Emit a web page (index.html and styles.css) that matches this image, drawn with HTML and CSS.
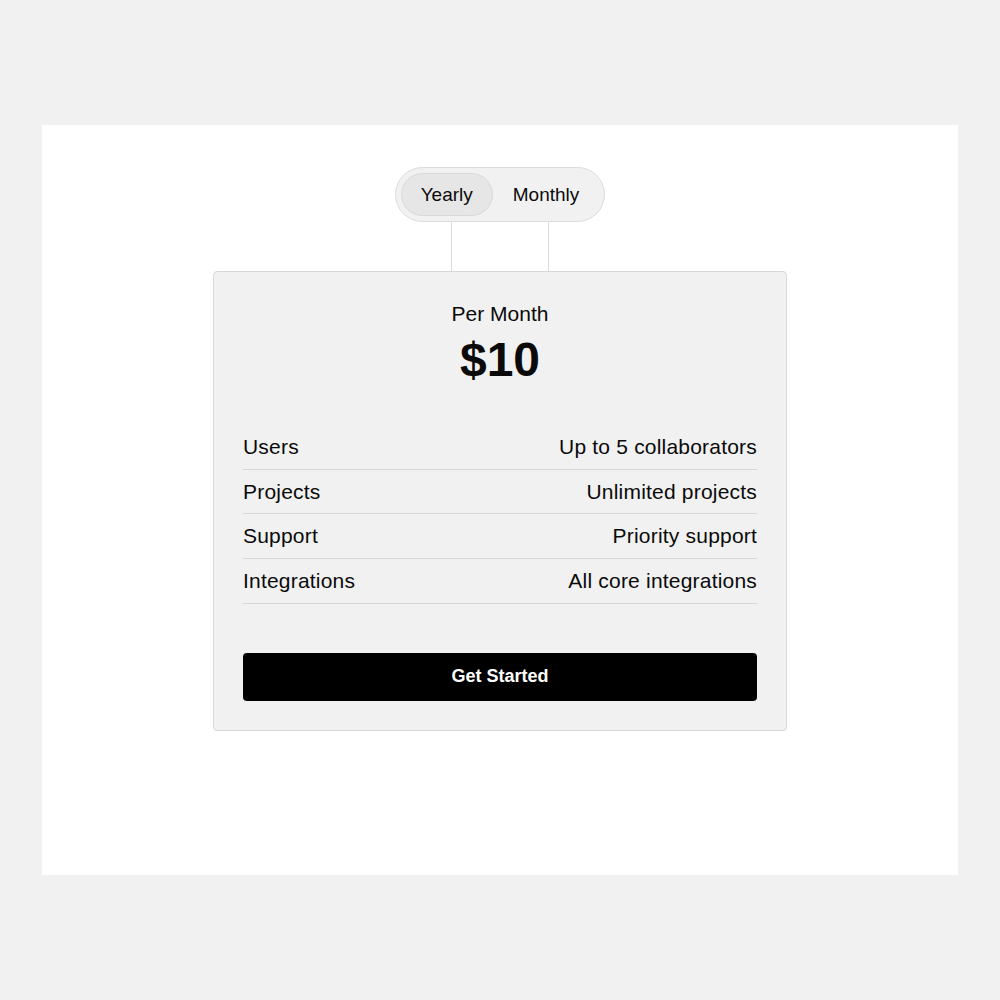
FILE: index.html
```html
<!DOCTYPE html>
<html lang="en">
  <head>
    <meta charset="UTF-8" />
    <title>Pricing</title>
    <link rel="stylesheet" href="styles.css">
  </head>
  <body>
    <div class="panel">
      <div class="toggle">
        <button class="toggle-option active">Yearly</button>
        <button class="toggle-option">Monthly</button>
      </div>
      <div class="connector"></div>
      <div class="card">
        <div class="period">Per Month</div>
        <div class="price">$10</div>
        <ul class="features">
          <li><span>Users</span><span>Up to 5 collaborators</span></li>
          <li><span>Projects</span><span>Unlimited projects</span></li>
          <li><span>Support</span><span>Priority support</span></li>
          <li><span>Integrations</span><span>All core integrations</span></li>
        </ul>
        <button class="cta">Get Started</button>
      </div>
    </div>
  </body>
</html>
```

FILE: styles.css
```css
html {
  height: 100%;
}

body,
button {
  font-family: "Liberation Sans", Arial, sans-serif;
  color: #0a0a0a;
}

body {
  margin: 0;
  min-height: 100vh;
  background: #f1f1f1;
  display: flex;
  align-items: center;
  justify-content: center;
}

.panel {
  width: 916px;
  height: 750px;
  box-sizing: border-box;
  background: #fff;
  padding-top: 42px;
  display: flex;
  flex-direction: column;
  align-items: center;
}

.toggle {
  display: flex;
  padding: 5px;
  background: #f1f1f1;
  border: 1px solid #dcdcdc;
  border-radius: 28px;
}

.toggle-option {
  height: 43px;
  padding: 0 19px;
  font-size: 19px;
  background: transparent;
  border: 1px solid transparent;
  border-radius: 22px;
}

.toggle-option.active {
  background: #e6e6e6;
  border-color: #d9d9d9;
}

.connector {
  width: 96px;
  height: 49px;
  border-left: 1px solid #dcdcdc;
  border-right: 1px solid #dcdcdc;
}

.card {
  width: 574px;
  box-sizing: border-box;
  padding: 30px 29px 29px;
  background: #f1f1f1;
  border: 1px solid #d8d8d8;
  border-radius: 4px;
  text-align: center;
}

.period {
  font-size: 21px;
  line-height: 24px;
  margin-bottom: 6px;
}

.price {
  font-size: 48px;
  font-weight: bold;
  line-height: 56px;
}

.features {
  list-style: none;
  margin: 37px 0 49px;
  padding: 0;
}

.features li {
  display: flex;
  justify-content: space-between;
  font-size: 21px;
  line-height: 24px;
  letter-spacing: 0.2px;
  padding: 10px 0 9.7px;
  border-bottom: 1px solid #d6d6d6;
}

.cta {
  display: block;
  width: 100%;
  height: 48px;
  border: none;
  border-radius: 4px;
  background: #000;
  color: #fff;
  font-size: 18px;
  font-weight: bold;
}
```
